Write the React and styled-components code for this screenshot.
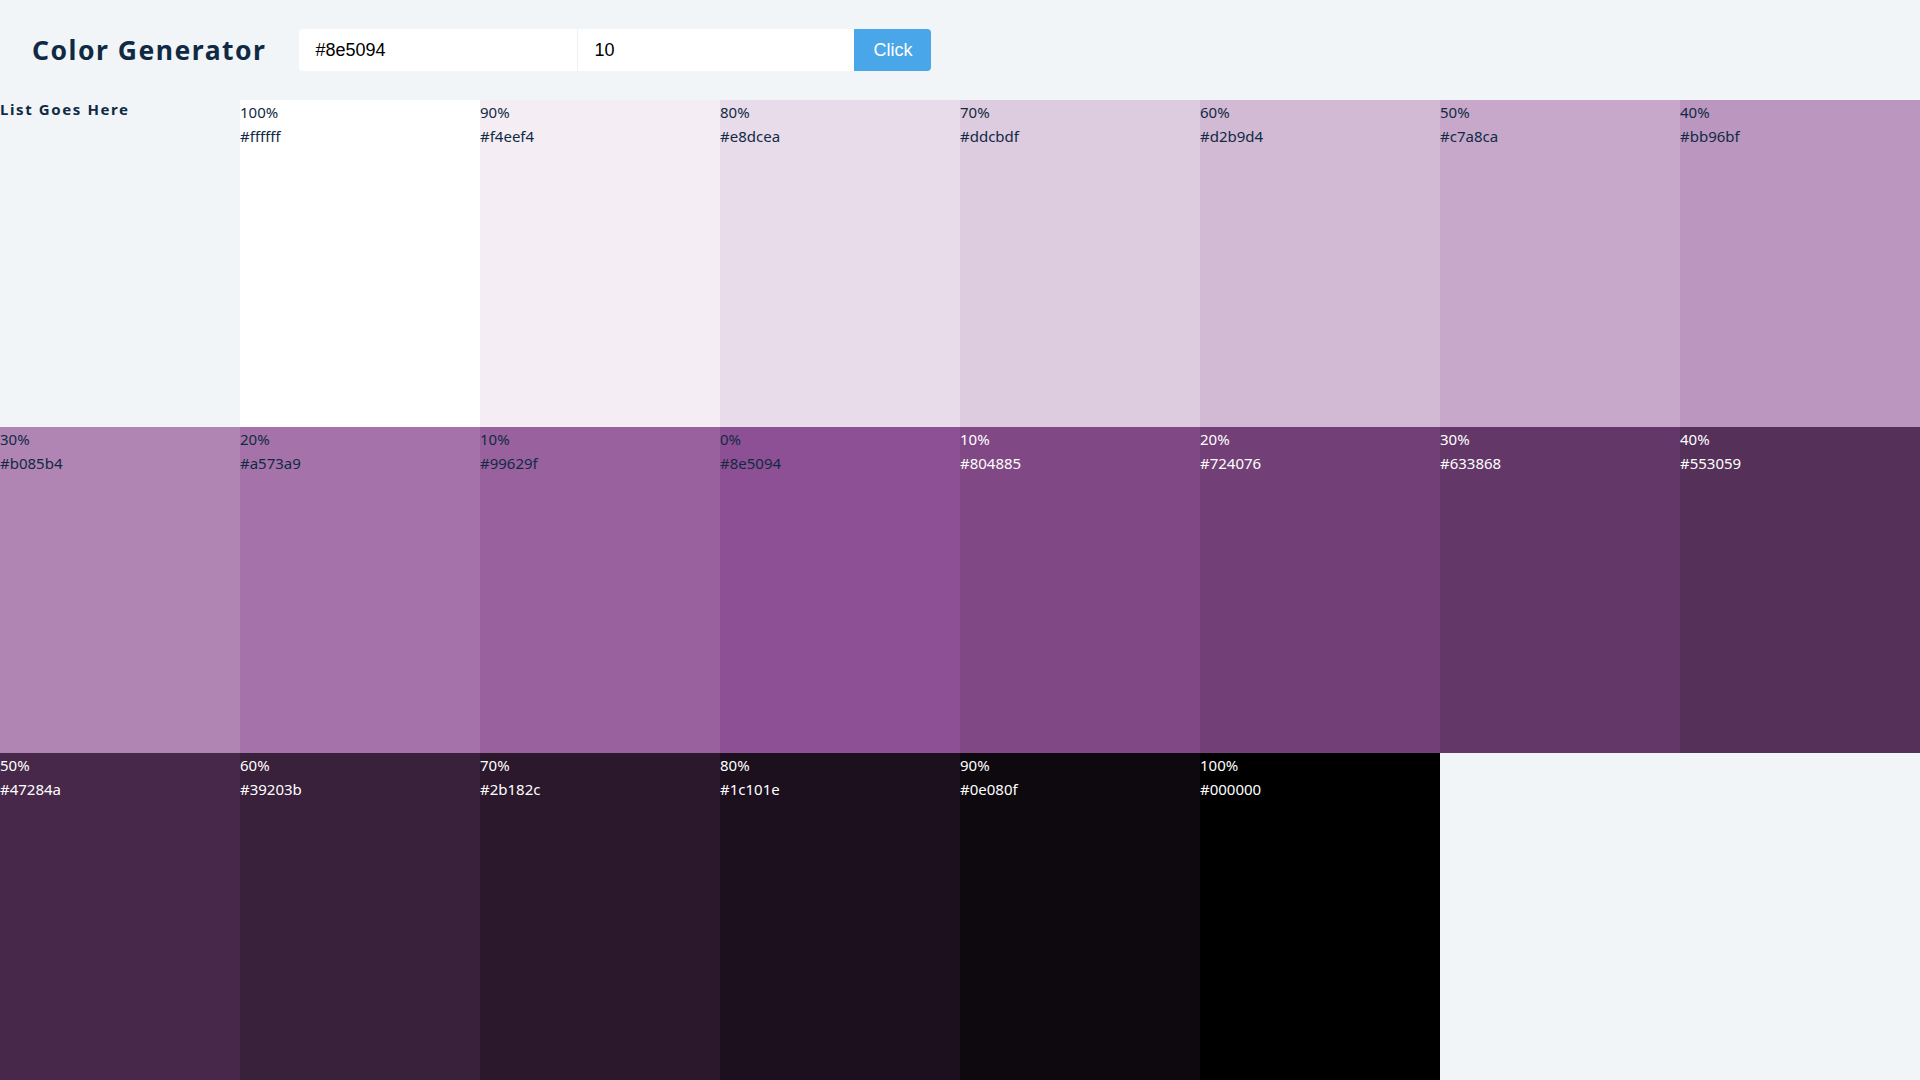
import React, { useState } from 'react';
import styled, { createGlobalStyle } from 'styled-components';

const GlobalStyle = createGlobalStyle`
  * { box-sizing: border-box; }
  body {
    margin: 0;
    background: #f1f5f8;
    color: #102a43;
    font-family: "Noto Sans", "Open Sans", sans-serif;
  }
`;

const shades = [
  ['ffffff', 100], ['f4eef4', 90], ['e8dcea', 80], ['ddcbdf', 70], ['d2b9d4', 60],
  ['c7a8ca', 50], ['bb96bf', 40], ['b085b4', 30], ['a573a9', 20], ['99629f', 10],
  ['8e5094', 0], ['804885', 10], ['724076', 20], ['633868', 30], ['553059', 40],
  ['47284a', 50], ['39203b', 60], ['2b182c', 70], ['1c101e', 80], ['0e080f', 90],
  ['000000', 100],
];

const Header = styled.section`
  display: flex;
  align-items: center;
  height: 100px;
  padding-left: 32px;
`;

const Title = styled.h3`
  margin: 0 33px 0 0;
  font-size: 26.5px;
  font-weight: 700;
  letter-spacing: 1.5px;
  color: #102a43;
`;

const Form = styled.form`
  display: flex;
`;

const Input = styled.input`
  width: ${props => props.$width}px;
  height: 42px;
  border: none;
  outline: none;
  padding: 0 16px;
  background: #fff;
  font-family: "Liberation Sans", Arial, sans-serif;
  font-size: 18px;
  color: #000;
  border-radius: ${props => (props.$first ? '4px 0 0 4px' : '0')};
  ${props => props.$first && 'border-right: 1px solid #eef1f4;'}
`;

const Button = styled.button`
  height: 42px;
  padding: 0 19px;
  border: none;
  border-radius: 0 4px 4px 0;
  background: #49a6e9;
  color: #fff;
  font-family: "Liberation Sans", Arial, sans-serif;
  font-size: 18px;
  cursor: pointer;
`;

const Colors = styled.section`
  display: grid;
  grid-template-columns: repeat(8, 1fr);
  grid-template-rows: repeat(3, 1fr);
  min-height: calc(100vh - 100px);
`;

const Heading = styled.h4`
  margin: 0;
  font-size: 15px;
  line-height: 1.25;
  letter-spacing: 1.6px;
  font-weight: 700;
  color: #102a43;
`;

const Swatch = styled.article`
  background: ${props => props.$bg};
  color: ${props => (props.$light ? '#ffffff' : '#102a43')};
`;

const Line = styled.p`
  margin: 0;
  font-size: 15px;
  line-height: 24px;
`;

const App = () => {
  const [color, setColor] = useState('#8e5094');
  const [amount, setAmount] = useState('10');

  return (
    <>
      <GlobalStyle />
      <Header>
        <Title>Color Generator</Title>
        <Form onSubmit={e => e.preventDefault()}>
          <Input $first $width={279} value={color} onChange={e => setColor(e.target.value)} />
          <Input $width={276} value={amount} onChange={e => setAmount(e.target.value)} />
          <Button type="submit">Click</Button>
        </Form>
      </Header>
      <Colors>
        <Heading>List Goes Here</Heading>
        {shades.map(([hex, weight], index) => (
          <Swatch key={index} $bg={`#${hex}`} $light={index > 10}>
            <Line>{weight}%</Line>
            <Line>#{hex}</Line>
          </Swatch>
        ))}
      </Colors>
    </>
  );
};

export default App;
